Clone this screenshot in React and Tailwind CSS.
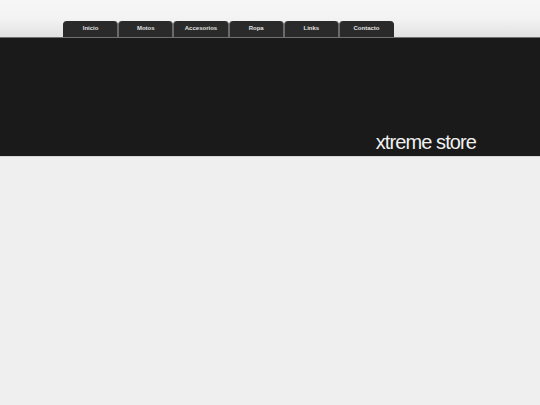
const TABS = ['Inicio', 'Motos', 'Accesorios', 'Ropa', 'Links', 'Contacto'];

export default function App() {
  return (
    <div className="w-[540px] h-[405px] bg-[#efefef] overflow-hidden" style={{ fontFamily: '"Liberation Sans", Arial, sans-serif' }}>
      {/* Top strip with tabs */}
      <div className="h-[37px] bg-gradient-to-b from-[#f6f6f6] via-[#f3f3f3] to-[#e2e2e2] flex items-end pl-[63px]">
        {TABS.map((t) => (
          <div
            key={t}
            className="w-[55.2px] h-[16px] bg-[#2a2a2a] rounded-t-[4px] border-x border-[#6a6a6a] first:border-l-[#2a2a2a] last:border-r-[#2a2a2a] flex items-start justify-center pt-[3px] text-[6px] font-bold text-[#e0e0e0]"
          >
            {t}
          </div>
        ))}
      </div>
      {/* Dark banner */}
      <div className="h-[119px] bg-[#1a1a1a] border-t border-[#707070] flex items-end justify-end pr-[64px] pb-[3px]">
        <span className="text-[20px] text-[#f0f0f0] leading-none tracking-[-0.9px] pb-[1px]">xtreme store</span>
      </div>
      <div className="h-px bg-[#d8d8d8]" />
    </div>
  );
}
